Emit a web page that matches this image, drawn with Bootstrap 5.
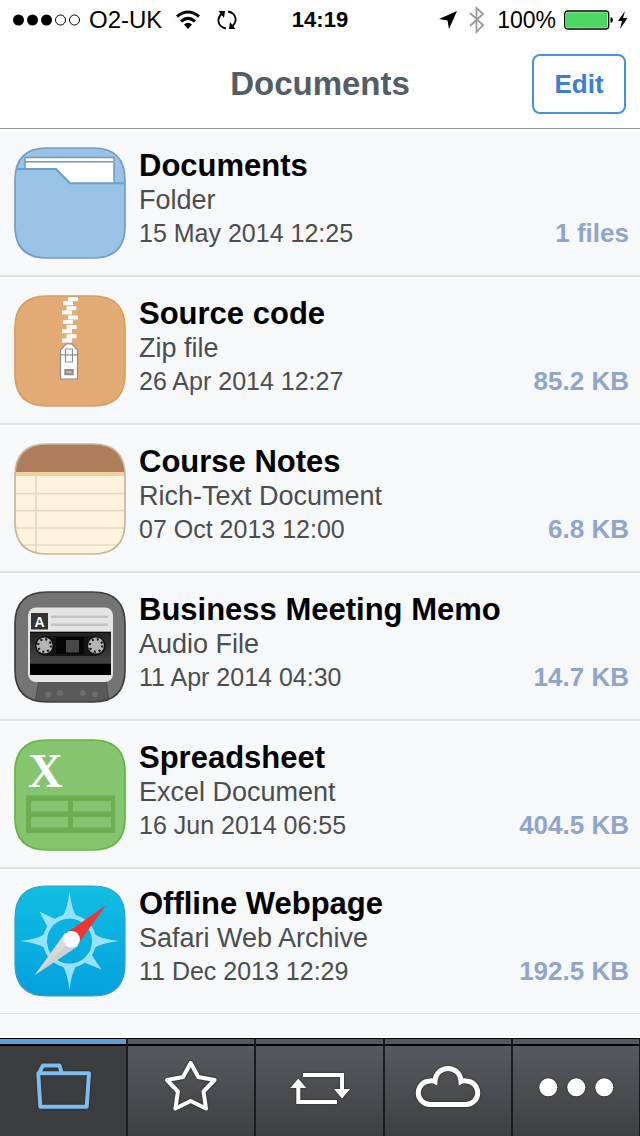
<!DOCTYPE html>
<html lang="en">
<head>
<meta charset="utf-8">
<meta name="viewport" content="width=device-width, initial-scale=1">
<title>Documents</title>
<link href="https://cdn.jsdelivr.net/npm/bootstrap@5.3.0/dist/css/bootstrap.min.css" rel="stylesheet">
<style>
body{font-family:"Liberation Sans",Arial,sans-serif;background:#f6f8fa;color:#000}
.top-bar{background:#fff;border-bottom:1px solid #96999d}
.three-up{display:grid;grid-template-columns:1fr auto 1fr;align-items:center}
.status{height:40px;padding:0 12px;line-height:28px}
.carrier{font-size:24px}
.clock{font-size:22px;font-weight:700}
.percent{font-size:23px}
.title-row{height:88px;padding:0 14px}
.page-title{font-size:33px;line-height:40px;font-weight:700;color:#545c68}
.btn-edit{--bs-btn-color:#3a80cf;--bs-btn-border-color:#4a90dc;--bs-btn-border-width:2px;--bs-btn-border-radius:8px;--bs-btn-bg:#fff;--bs-btn-hover-color:#3a80cf;--bs-btn-hover-border-color:#4a90dc;width:94px;height:60px;font-size:26px;font-weight:700;line-height:32px;padding:0}
.files .file.list-group-item{padding:16px 11px 16px 14px;gap:13px;background:#f6f8fa;color:#000;border:0 solid #dfe2e5;border-width:2px 0;border-top-color:#fff;border-radius:0}
.files .file.list-group-item:last-child{padding-top:14px;border-bottom-width:1px}
.file-icon{width:112px;height:112px}
.file-text{padding-top:1px}
.file-name{font-size:31px;line-height:36px;font-weight:700}
.file-kind{font-size:27px;line-height:32px;color:#4c4d50}
.file-date,.file-size{font-size:25px;line-height:34px;color:#4c4d50}
.file-size{font-size:26px;font-weight:700;color:#90a5cb}
.tabs{background:#000;border-top:1px solid #000;box-shadow:0 -2px #fff}
.tab-link{height:97px;border-right:2px solid #1c1c1f;color:#fff;background:linear-gradient(#5a5b61,#3f4043)}
.tab-link:last-child{border-right-width:1px}
.tab-link::before{content:"";display:block;height:7px;background:#58595e;border-bottom:2px solid #000}
.tab-link svg{display:block;margin:12px auto 0;filter:drop-shadow(0 0 1px #222)}
.tab-link.active{background:#3c3d3f;color:#7dbdf2}
.tab-link.active::before{background:#5d9fd8}
</style>
</head>
<body class="d-flex flex-column min-vh-100">
<svg width="0" height="0" class="position-absolute" aria-hidden="true">
<defs>
<path id="tile" d="M1 33C1 12 12 1 33 1H79C100 1 111 12 111 33V79C111 100 100 111 79 111H33C12 111 1 100 1 79Z"/>
<clipPath id="tileClip"><use href="#tile"/></clipPath>
<linearGradient id="sky" x1="0" y1="0" x2="0" y2="1"><stop stop-color="#0fbfe2"/><stop offset="1" stop-color="#05a0de"/></linearGradient>
<linearGradient id="deck" x1="0" y1="0" x2="0" y2="1"><stop stop-color="#222"/><stop offset="1" stop-color="#444"/></linearGradient>
<g id="reel"><circle r="9" fill="#111"/><circle r="8" fill="#b5b5b5"/><circle r="6.3" fill="none" stroke="#222" stroke-width="2.4" stroke-dasharray="2 2.95"/><circle r="5" fill="#b5b5b5"/></g>
</defs>
</svg>

<header class="top-bar">
  <div class="status three-up">
    <div class="d-flex align-items-center">
      <svg class="me-2" width="69" height="14" viewBox="0 0 69 14"><g><circle cx="6.500" cy="7" r="5.500"/><circle cx="20.500" cy="7" r="5.500"/><circle cx="34.500" cy="7" r="5.500"/></g><g fill="none" stroke="#000"><circle cx="48.500" cy="7" r="5"/><circle cx="62.500" cy="7" r="5"/></g></svg>
      <span class="carrier text-nowrap">O2-UK</span>
      <svg class="ms-2 me-3" width="31" height="20" viewBox="-6 0 31 20"><g fill="none" stroke="#000" stroke-width="3"><path d="M1 6.500Q12 -2.500 23 6.500"/><path d="M5 11.300Q12 5.500 19 11.300"/></g><path d="M8 14.500Q12 11 16 14.500L12 19Z"/></svg>
      <svg width="20" height="20" viewBox="0 0 20 20"><g fill="none" stroke="#000" stroke-width="1.800"><path d="M9 18.500C1 17 -1 9 4.500 4"/><path d="M11 1.500C19 3 21 11 15.500 16"/></g><path d="M1.500 1H8L7 8Z"/><path d="M18.500 19H12L13 12Z"/></svg>
    </div>
    <span class="clock">14:19</span>
    <div class="d-flex align-items-center justify-content-end">
      <svg class="me-2" width="20" height="20" viewBox="0 0 20 20"><path d="M19 1L11 19L9.500 10.500L1 9Z"/></svg>
      <svg class="me-2" width="23" height="28" viewBox="0 0 23 28"><path d="M4 7L17 19L10.500 26V2L17 8L4 20" fill="none" stroke="#999" stroke-width="1.800"/></svg>
      <span class="percent">100%</span>
      <svg class="ms-2" width="64" height="20" viewBox="0 0 64 20"><rect x=".700" y="1" width="44" height="18" rx="3" fill="#fff" stroke="#000" stroke-width="1.300"/><rect x="2" y="2.300" width="41.400" height="15.400" rx="1.500" fill="#4cd663"/><path d="M46.500 7Q49 7.500 49 10T46.500 13Z"/><path d="M61 1L54 11H58L56 19L63.500 8H59Z"/></svg>
    </div>
  </div>
  <div class="title-row three-up">
    <span></span>
    <h1 class="page-title m-0">Documents</h1>
    <button type="button" class="btn btn-edit ms-auto">Edit</button>
  </div>
</header>

<main class="flex-grow-1">
<div class="files list-group">
  <a href="#documents" class="file list-group-item d-flex">
    <svg class="file-icon flex-shrink-0" viewBox="0 0 112 112"><g clip-path="url(#tileClip)"><rect width="112" height="112" fill="#98c3e6"/><path d="M11 40V10.500H100V40Z" fill="#fff" stroke="#7199b8" stroke-width="1.500"/><path d="M11 14.700H100" stroke="#7199b8" stroke-width="1.500"/><path d="M-2 22H42L56 36.300H114V114H-2Z" fill="#98c3e6" stroke="#6a9fcb" stroke-width="2"/></g><use href="#tile" fill="none" stroke="#759dbe" stroke-width="1.700"/></svg>
    <div class="file-text flex-grow-1"><div class="file-name">Documents</div><div class="file-kind">Folder</div><div class="d-flex justify-content-between"><span class="file-date">15 May 2014 12:25</span><span class="file-size">1 files</span></div></div>
  </a>
  <a href="#source" class="file list-group-item d-flex">
    <svg class="file-icon flex-shrink-0" viewBox="0 0 112 112"><use href="#tile" fill="#e2ab76" stroke="#d79e61" stroke-width="1.700"/><g fill="#fff"><path d="M54 2h10v4h-10zM49 6.300h10v4h-10zM52.500 11.300h10v4h-10zM48 15.600h10v4h-10zM54 20.600h10v4h-10zM49 24.900h10v4h-10zM52.500 29.900h10v4h-10zM48 34.200h10v4h-10zM52.500 39.200h10v4h-10zM48 43.500h10v4h-10z"/></g><g fill="#fff" stroke="#8b8d90" stroke-width="1.200"><path d="M46.500 55L52 49H58L63.500 55V84H46.500Z"/><path d="M51.500 54H58.500V67H51.500ZM46.500 59.800H63.500" fill="none"/><path d="M51.300 75H58.700V79.300H51.300Z" fill="#ddae80" stroke-width="2"/></g></svg>
    <div class="file-text flex-grow-1"><div class="file-name">Source code</div><div class="file-kind">Zip file</div><div class="d-flex justify-content-between"><span class="file-date">26 Apr 2014 12:27</span><span class="file-size">85.2 KB</span></div></div>
  </a>
  <a href="#notes" class="file list-group-item d-flex">
    <svg class="file-icon flex-shrink-0" viewBox="0 0 112 112"><g clip-path="url(#tileClip)"><rect width="112" height="112" fill="#fef3de"/><rect width="112" height="29" fill="#ae7d5c"/><rect y="29" width="112" height="4" fill="#f4cda0"/><path d="M0 50.700H112M0 67.700H112M0 85H112M0 102H112M22 33V112" stroke="#e2d9c5" stroke-width="1.700"/></g><use href="#tile" fill="none" stroke="#c9b695" stroke-width="1.700"/></svg>
    <div class="file-text flex-grow-1"><div class="file-name">Course Notes</div><div class="file-kind">Rich-Text Document</div><div class="d-flex justify-content-between"><span class="file-date">07 Oct 2013 12:00</span><span class="file-size">6.8 KB</span></div></div>
  </a>
  <a href="#memo" class="file list-group-item d-flex">
    <svg class="file-icon flex-shrink-0" viewBox="0 0 112 112"><g clip-path="url(#tileClip)"><rect width="112" height="112" fill="#747474"/><path d="M25 88H92L95 112H21Z" fill="#595959"/><path d="M25 88L21 112M92 88L95 112" stroke="#4c4c4c" stroke-width="1"/><g fill="#6d6d6d"><circle cx="34.300" cy="103.500" r="3"/><circle cx="46" cy="102" r="3"/><circle cx="69" cy="102" r="3"/><circle cx="81" cy="103.500" r="3"/></g></g><rect x="14" y="16.500" width="85" height="74.500" rx="8" fill="#e4e4e4"/><rect x="17" y="22" width="17" height="16.500" fill="#333"/><text x="25.500" y="35.500" text-anchor="middle" font-family="Liberation Sans" font-weight="700" font-size="14" fill="#fff">A</text><path d="M37 25.700H94M37 33.700H94" stroke="#c2c2c2" stroke-width="2.500"/><rect x="16" y="40.700" width="81" height="43.300" fill="#000"/><rect x="16" y="41.700" width="81" height="31" fill="url(#deck)"/><rect x="21" y="45" width="71" height="20" rx="10" fill="#151515"/><rect x="42" y="46" width="28" height="17" fill="#060606"/><rect x="52" y="49" width="13" height="12.500" fill="#484848"/><use href="#reel" x="30.500" y="54.500"/><use href="#reel" x="82" y="54.500"/><use href="#tile" fill="none" stroke="#3f3f3f" stroke-width="1.700"/></svg>
    <div class="file-text flex-grow-1"><div class="file-name">Business Meeting Memo</div><div class="file-kind">Audio File</div><div class="d-flex justify-content-between"><span class="file-date">11 Apr 2014 04:30</span><span class="file-size">14.7 KB</span></div></div>
  </a>
  <a href="#spreadsheet" class="file list-group-item d-flex">
    <svg class="file-icon flex-shrink-0" viewBox="0 0 112 112"><use href="#tile" fill="#86c56f" stroke="#63b540" stroke-width="1.700"/><text x="14" y="48" font-family="Liberation Serif" font-weight="700" font-size="48" fill="#fff">X</text><path fill="#6bad50" fill-rule="evenodd" d="M12 56.500H101V94H12ZM17 62V72.500H54V62ZM59 62V72.500H97V62ZM17 78V88.500H54V78ZM59 78V88.500H97V78Z"/></svg>
    <div class="file-text flex-grow-1"><div class="file-name">Spreadsheet</div><div class="file-kind">Excel Document</div><div class="d-flex justify-content-between"><span class="file-date">16 Jun 2014 06:55</span><span class="file-size">404.5 KB</span></div></div>
  </a>
  <a href="#webpage" class="file list-group-item d-flex">
    <svg class="file-icon flex-shrink-0" viewBox="0 0 112 112"><use href="#tile" fill="url(#sky)" stroke="#3f9cbd" stroke-width="1.200"/><g fill="#97e2f9"><path id="ray" d="M55.500 6.500Q57.500 25 63 32H48Q53.500 25 55.500 6.500Z"/><use href="#ray" transform="rotate(90 55.500 56)"/><use href="#ray" transform="rotate(180 55.500 56)"/><use href="#ray" transform="rotate(270 55.500 56)"/><path d="M25.500 26.500L43 35L34 43ZM87.500 84.500L69 77L77 69Z"/></g><circle cx="55.500" cy="56" r="24.500" fill="none" stroke="#97e2f9" stroke-width="4"/><path d="M92 20.300L62.500 61L51 49Z" fill="#f0342f"/><path d="M20.700 90.300L51 48L64 61Z" fill="#d9d9d9"/><path d="M20.700 90.300L57.500 55L64 61Z" fill="#bfc8cc" opacity=".5"/><circle cx="57.700" cy="54.300" r="8.300" fill="#fff"/></svg>
    <div class="file-text flex-grow-1"><div class="file-name">Offline Webpage</div><div class="file-kind">Safari Web Archive</div><div class="d-flex justify-content-between"><span class="file-date">11 Dec 2013 12:29</span><span class="file-size">192.5 KB</span></div></div>
  </a>
</div>
</main>

<nav class="tabs d-flex sticky-bottom" aria-label="Sections">
  <a href="#files" class="tab-link active flex-fill" aria-label="Files" aria-current="page"><svg width="80" height="56" viewBox="-8 0 80 56" fill="none" stroke="currentColor" stroke-width="4" stroke-linejoin="round"><path d="M7.300 15.300H58L55.700 48.700H9.300ZM8 15L12 7.500H28.500L30.700 15"/></svg></a>
  <a href="#favourites" class="tab-link flex-fill" aria-label="Favourites"><svg width="80" height="56" viewBox="-8 0 80 56" fill="none" stroke="currentColor" stroke-width="4" stroke-linejoin="round"><path d="M31.700 5L39.300 19L55.500 22L44.500 33.500L47 50.500L31.700 43L16.400 50.500L18.900 33.500L8 22L24 19Z"/></svg></a>
  <a href="#transfers" class="tab-link flex-fill" aria-label="Transfers"><svg width="80" height="56" viewBox="-8 0 80 56" fill="currentColor"><path d="M15 17H54V33M10.300 28V44H49" fill="none" stroke="currentColor" stroke-width="4"/><path d="M46 31H62L54 40.500ZM2.300 30L10.300 20.500L18.300 30Z"/></svg></a>
  <a href="#cloud" class="tab-link flex-fill" aria-label="Cloud"><svg width="80" height="56" viewBox="-8 0 80 56" fill="none" stroke="currentColor" stroke-width="5"><path d="M14 46.500A11.700 11.700 0 0 1 14 23Q17 22.500 19 23.500C20 6 44 6 45 23.500Q47 22.500 50 23A11.700 11.700 0 0 1 50 46.500Z"/></svg></a>
  <a href="#more" class="tab-link flex-fill" aria-label="More"><svg width="80" height="56" viewBox="-8 0 80 56" fill="currentColor"><circle cx="4.300" cy="29.300" r="9"/><circle cx="32.300" cy="29.300" r="9"/><circle cx="60.300" cy="29.300" r="9"/></svg></a>
</nav>
<script src="https://cdn.jsdelivr.net/npm/bootstrap@5.3.0/dist/js/bootstrap.bundle.min.js"></script>
</body>
</html>
